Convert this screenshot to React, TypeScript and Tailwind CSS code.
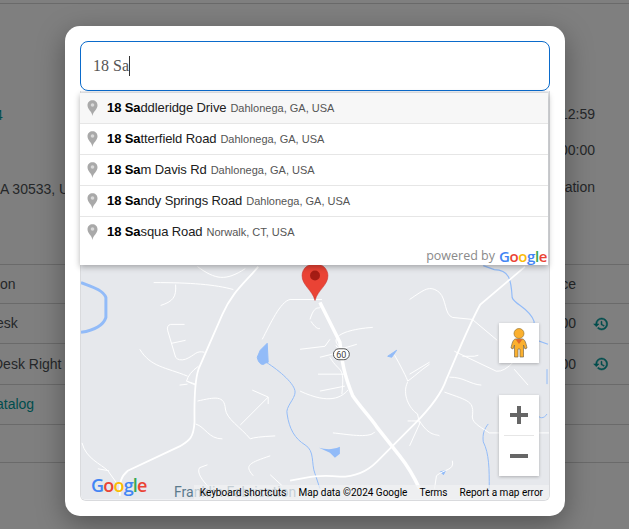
const suggestions = [
  { match: '18 Sa', rest: 'ddleridge Drive', place: 'Dahlonega, GA, USA' },
  { match: '18 Sa', rest: 'tterfield Road', place: 'Dahlonega, GA, USA' },
  { match: '18 Sa', rest: 'm Davis Rd', place: 'Dahlonega, GA, USA' },
  { match: '18 Sa', rest: 'ndy Springs Road', place: 'Dahlonega, GA, USA' },
  { match: '18 Sa', rest: 'squa Road', place: 'Norwalk, CT, USA' },
];

const thinRoads = [
  'M197 267 C215 280 225 282 245 269',
  'M233 290 C215 285 190 283 153 283',
  'M175 285 C176 298 172 302 160 306',
  'M184 325 H170 Q166 326 167 331 L175 358 Q178 362 185 360 C195 356 195 351 204 353',
  'M171 344 L185 341',
  'M139 350 C150 368 165 368 187 377',
  'M198 367 Q188 374 186 382 L195 385 M186 382 L195 386 M187 385 L179 386',
  'M197 402 C215 398 224 396 225 410 C226 420 240 428 250 440 Q254 438 275 437',
  'M240 426 L268 398 L252 391 M268 398 L268 405',
  'M195 425 C205 428 208 440 222 440',
  'M81 444 C85 460 100 465 107 472 L117 486',
  'M97 470 L108 472',
  'M199 469 L207 466 M199 469 C196 474 202 482 208 488',
  'M322 300 H290 C280 302 270 325 262 340',
  'M311 322 C315 328 318 330 320 329 M320 303 C322 315 316 300 310 320',
  'M410 300 C425 290 430 285 440 293 C447 300 445 315 453 318 L473 320 L498 341',
  'M343 350 C325 338 345 330 373 328',
  'M320 358 L340 353 M320 392 L345 387 M330 358 C340 375 345 365 342 395',
  'M395 356 C400 365 408 380 408 382 C414 378 420 372 430 365',
  'M408 383 C402 395 410 410 418 415 L420 425 L410 447',
  'M430 363 L410 375',
  'M455 352 L497 372 Q505 373 515 362 M515 370 L529 386',
  'M450 378 C465 378 470 385 482 386',
  'M445 393 C470 402 475 402 473 418 C473 425 485 430 490 434 H550',
  'M463 357 H475 L479 356',
  'M333 434 C345 435 370 440 375 433',
  'M408 422 L412 422 L420 422 C430 438 437 435 440 437',
  'M253 477 C243 466 250 464 270 457 M270 476 L282 487',
  'M453 462 C455 472 445 470 437 477 L435 490',
  'M330 340 L325 347 L300 350',
  'M318 375 H344 M300 392 C330 406 342 398 348 391',
  'M336 346 C337 352 350 347 357 345',
];

function MapCanvas() {
  return (
    <svg viewBox="80 91 470 410" className="w-full h-full block" fill="none">
      <rect x="80" y="91" width="470" height="410" fill="#e6e8ec" />
      {/* water */}
      <path d="M80 283 C90 287 102 290 105 298 V318 C102 327 92 331 80 333" stroke="#92bbf8" strokeWidth="3" />
      <path d="M267 344 L260 351 L257 358 C258 364 262 367 265 364 L268 363 Z" fill="#92bbf8" stroke="#92bbf8" />
      <path d="M266 363 C280 372 295 385 295 393 C295 400 285 408 287 415 C289 430 295 440 305 446 C315 452 311 465 315 475 L320 490" stroke="#92bbf8" strokeWidth="1" />
      <path d="M319 449 C325 450 330 452 340 448 L340 455 L335 459 L330 454 Z" fill="#92bbf8" />
      <path d="M388 357 L397 351 L392 358 Z" fill="#92bbf8" stroke="#92bbf8" />
      <path d="M441 473 L446 472 L444 476 Z" fill="#92bbf8" stroke="#92bbf8" />
      <path d="M484 266 L495 270 C510 270 512 280 513 298 C515 305 530 308 535 322 L535 340 L549 345" stroke="#92bbf8" strokeWidth="1.2" />
      <path d="M548 370 V385 M548 415 C545 420 540 420 538 415" stroke="#92bbf8" strokeWidth="1" />
      <path d="M489 425 C485 430 483 435 484 443 C490 455 490 470 490 490" stroke="#92bbf8" strokeWidth="1" />
      {/* roads */}
      {thinRoads.map((d) => (
        <path key={d} d={d} stroke="#ffffff" strokeWidth="1" />
      ))}
      <path d="M258 267 C245 283 232 292 222 315 L198 370 C193 385 194 410 194 423 C193 440 188 442 180 447 L127 472 C120 478 119 482 119 497" stroke="#ffffff" strokeWidth="1.8" />
      <path d="M320 303 L340 343 C342 360 343 373 353 397 C362 410 372 420 377 428 L400 457 C408 467 414 477 420 490" stroke="#ffffff" strokeWidth="3.5" />
      <path d="M526 267 L481 305 C470 325 462 345 447 380 C442 395 430 410 415 425 L400 440 L377 463 C365 475 350 478 340 478 C320 476 310 478 290 482" stroke="#ffffff" strokeWidth="1.8" />
      {/* route shield */}
      <rect x="333.5" y="349.5" width="16" height="11" rx="5.5" fill="#ffffff" stroke="#555555" />
      <text x="341.5" y="358.5" textAnchor="middle" fontSize="9" fill="#444444" fontFamily="Roboto, sans-serif">60</text>
      {/* marker */}
      <path d="M315 301 C312 290 302 286 302 276 C302 269 308 264 315 264 C322 264 328 269 328 276 C328 286 318 290 315 301 Z" fill="#ea4335" stroke="#c5221f" strokeWidth="0.5" />
      <circle cx="315" cy="276" r="5" fill="#a51c14" />
    </svg>
  );
}

function Pegman() {
  return (
    <svg width="18" height="30" viewBox="0 0 18 30">
      <circle cx="9" cy="5.5" r="5" fill="#fbb02e" stroke="#8a6d2f" strokeWidth="0.6" />
      <path d="M5 11 H13 C15 12 16 15 17 20 L15 21 L13.5 17 V29 H10 V21 H8 V29 H4.5 V17 L3 21 L1 20 C2 15 3 12 5 11 Z" fill="#fbb02e" stroke="#7a6a4a" strokeWidth="0.7" />
      <path d="M5.5 11.3 H12.5 L9 16 Z" fill="#e0662a" />
    </svg>
  );
}

function RestoreIcon() {
  return (
    <svg width="16" height="16" viewBox="0 0 24 24" className="ml-[17px] mr-[20px] text-[#004d4d]">
      <path
        d="M13 3a9 9 0 0 0-9 9H1l3.89 3.89.07.14L9 12H6c0-3.87 3.13-7 7-7s7 3.13 7 7-3.13 7-7 7c-1.93 0-3.68-.79-4.94-2.06l-1.42 1.42A8.954 8.954 0 0 0 13 21a9 9 0 0 0 0-18zm-1 5v5l4.28 2.54.72-1.21-3.5-2.08V8H12z"
        fill="currentColor"
        stroke="currentColor"
        strokeWidth="0.8"
      />
    </svg>
  );
}

function GoogleWord({ className }: { className: string }) {
  return (
    <span className={className}>
      <span className="text-[#4285f4]">G</span>
      <span className="text-[#ea4335]">o</span>
      <span className="text-[#fbbc05]">o</span>
      <span className="text-[#4285f4]">g</span>
      <span className="text-[#34a853]">l</span>
      <span className="text-[#ea4335]">e</span>
    </span>
  );
}

function PlaceIcon() {
  return (
    <svg width="11" height="16" viewBox="0 0 11 16" className="shrink-0">
      <path d="M5.5 16 C4.8 11 0.5 9.5 0.5 5.2 C0.5 2.4 2.7 0.3 5.5 0.3 C8.3 0.3 10.5 2.4 10.5 5.2 C10.5 9.5 6.2 11 5.5 16 Z" fill="#a9a9a9" />
      <circle cx="5.5" cy="5" r="1.8" fill="#d9d9d9" />
    </svg>
  );
}

const rows = [
  { left: 'on', right: 'ce', h: 'h-[39px]', ml: 'ml-0' },
  { left: 'esk', right: '00', icon: true, h: 'h-[40px]', ml: 'ml-[-4px]' },
  { left: 'Desk Right', right: '00', icon: true, h: 'h-[41px]', ml: 'ml-[-7px]' },
  { left: 'atalog', link: true, h: 'h-[40px]', ml: 'ml-[-4px]' },
  { left: '', h: 'h-[38px]', ml: 'ml-0' },
];

function BackgroundPage() {
  return (
    <div className="h-[529px] overflow-hidden bg-[#7f7f7f] text-[14px] text-[#252729] font-['Liberation_Sans',sans-serif]">
      <div className="h-[4px] border-b border-[#6a6a6a]" />
      <div className="h-[261px] border-b border-[#6a6a6a] flex justify-between pt-[100px] pr-[34px]">
        <div className="ml-[-5px] pt-[1px]">
          <div className="text-[#004d4d]">4</div>
          <div className="mt-[53px] whitespace-nowrap ml-[-6px]">GA 30533, USA</div>
        </div>
        <div className="flex flex-col items-end gap-[15px]">
          <div>12:59</div>
          <div className="mb-[1px]">00:00</div>
          <div className="whitespace-nowrap">Location</div>
        </div>
      </div>
      {rows.map((row, i) => (
        <div key={i} className={`${row.h} border-b border-[#6a6a6a] flex items-center justify-between`}>
          <span className={`${row.ml} ${row.link ? 'text-[#004d4d]' : ''}`}>{row.left}</span>
          <span className="flex items-center">
            <span>{row.right}</span>
            {row.icon && <RestoreIcon />}
            {!row.icon && row.right && <span className="w-[53px]" />}
          </span>
        </div>
      ))}
    </div>
  );
}

export default function App() {
  return (
    <div className="relative w-[629px] h-[529px] overflow-hidden">
      <BackgroundPage />
      <div className="absolute left-[65px] top-[26px] w-[500px] h-[490px] bg-white rounded-[15px] p-[15px] flex flex-col shadow-[0_8px_28px_rgba(0,0,0,0.35)]">
        <div className="h-[50px] shrink-0 rounded-[8px] border border-[#0b6bcb] flex items-center px-[12px] text-[16px] text-[#555555] font-['Liberation_Serif',serif]">
          18 Sa<span className="w-px h-[20px] bg-[#333333]" />
        </div>
        <div className="relative flex-1 rounded-b-[6px] overflow-hidden border-x border-b border-[#d9dadd]">
          <MapCanvas />
          {/* bottom-left logo */}
          <GoogleWord className="absolute left-[10px] bottom-[3px] text-[18px] font-semibold leading-[24px] tracking-[-0.8px] font-['Open_Sans',sans-serif]" />
          {/* place label under the attribution */}
          <span className="absolute left-[93px] bottom-0 text-[14px] leading-[16px] text-[#5b7a8c] whitespace-nowrap font-['Roboto',sans-serif]">Franklin Fabrication</span>
          <div className="absolute right-0 bottom-0 h-[15px] pb-[1px] flex items-center bg-[#f1f2f4]/70 text-[10px] text-black whitespace-nowrap font-['Roboto',sans-serif]">
            <span className="px-[6px]">Keyboard shortcuts</span>
            <span className="px-[6px]">Map data ©2024 Google</span>
            <span className="px-[6px]">Terms</span>
            <span className="px-[6px]">Report a map error</span>
          </div>
          <div className="absolute left-[418px] top-[232px] w-[40px] h-[40px] bg-white flex items-center justify-center shadow-[0_1px_3px_rgba(0,0,0,0.25)]">
            <Pegman />
          </div>
          <div className="absolute left-[418px] top-[304px] w-[40px] h-[81px] bg-white flex flex-col items-center shadow-[0_1px_3px_rgba(0,0,0,0.25)]">
            <div className="h-[40px] flex items-center justify-center">
              <svg width="18" height="18" viewBox="0 0 18 18"><path d="M0 7H7V0H11V7H18V11H11V18H7V11H0Z" fill="#666666" /></svg>
            </div>
            <div className="w-[30px] h-px bg-[#e6e6e6]" />
            <div className="h-[40px] flex items-center justify-center">
              <svg width="18" height="18" viewBox="0 0 18 18"><path d="M0 7H18V11H0Z" fill="#666666" /></svg>
            </div>
          </div>
        </div>
        {/* autocomplete dropdown */}
        <div className="absolute left-[15px] top-[67px] w-[468px] h-[172px] bg-white shadow-[0_2px_6px_rgba(0,0,0,0.3)] font-['Liberation_Sans',sans-serif]">
          {suggestions.map((s, i) => (
            <div key={s.rest} className={`h-[31px] flex items-center pl-[7px] gap-[9px] border-b ${i < 4 ? 'border-[#e6e6e6]' : 'border-transparent'} ${i === 0 ? 'bg-[#f7f7f7]' : ''}`}>
              <PlaceIcon />
              <span className="whitespace-nowrap text-[13px] text-[#202020]">
                <span className="tracking-[-0.1px]"><b className="text-black">{s.match}</b>{s.rest}</span>
                <span className="ml-[4px] text-[11px] text-[#555555]">{s.place}</span>
              </span>
            </div>
          ))}
          <div className="flex items-center justify-end h-[16px] pr-[1px] gap-[4px]">
            <span className="text-[12.5px] text-[#8a8a8a] font-['Open_Sans',sans-serif]">powered by</span>
            <GoogleWord className="text-[15px] font-semibold tracking-[-0.4px] font-['Open_Sans',sans-serif]" />
          </div>
        </div>
      </div>
    </div>
  );
}
